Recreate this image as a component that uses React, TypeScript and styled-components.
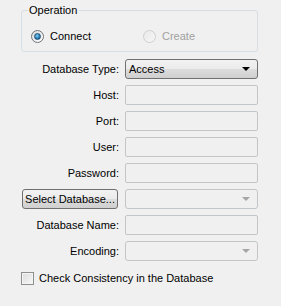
import { Fragment } from "react";
import styled, { createGlobalStyle } from "styled-components";

const GlobalStyle = createGlobalStyle`
  html, body {
    margin: 0;
    padding: 0;
    background: #f0f0f0;
  }
  body {
    font-family: "Liberation Sans", Arial, sans-serif;
    font-size: 11px;
    color: #000;
  }
`;

const Page = styled.div`
  width: 281px;
  height: 306px;
  box-sizing: border-box;
  padding: 4px 0 0 21px;
`;

const Group = styled.fieldset`
  width: 237px;
  box-sizing: border-box;
  margin: 0;
  padding: 13px 0 8px 9px;
  border: 1px solid #d5dfe5;
  border-radius: 3px;
  display: flex;
`;

const Legend = styled.legend`
  padding: 0 2px 0 1px;
  margin-left: -3px;
  line-height: 13px;
`;

const RadioLabel = styled.label<{ $disabled?: boolean }>`
  display: flex;
  align-items: center;
  gap: 6px;
  width: 112px;
  height: 13px;
  line-height: 13px;
  color: ${(p) => (p.$disabled ? "#a0a0a0" : "#000")};
`;

const RadioDot = styled.span<{ $checked?: boolean; $disabled?: boolean }>`
  width: 11px;
  height: 11px;
  border-radius: 50%;
  border: 1px solid ${(p) => (p.$disabled ? "#cfcfcf" : "#6f7479")};
  background: ${(p) =>
    p.$disabled
      ? "linear-gradient(135deg, #eaeaea, #f6f6f6)"
      : "linear-gradient(135deg, #dcdcdc, #ffffff)"};
  display: flex;
  align-items: center;
  justify-content: center;

  &::after {
    content: "";
    display: ${(p) => (p.$checked ? "block" : "none")};
    width: 5px;
    height: 5px;
    border-radius: 50%;
    background: radial-gradient(circle at 40% 35%, #7bd0f5, #1a6fa8 70%, #0d4f85);
    border: 1px solid #1e4d73;
  }
`;

const Form = styled.div`
  display: grid;
  grid-template-columns: 98px 133px;
  column-gap: 6px;
  row-gap: 6px;
  width: 237px;
  margin-top: 7px;
  align-items: center;
`;

const Label = styled.span`
  text-align: right;
  line-height: 20px;
  white-space: nowrap;
`;

const Field = styled.div`
  height: 20px;
  box-sizing: border-box;
  border: 1px solid #c2c6c9;
  border-radius: 2px;
  background: #f0f0f0;
`;

const Combo = styled.div<{ $disabled?: boolean }>`
  height: 20px;
  box-sizing: border-box;
  border: 1px solid ${(p) => (p.$disabled ? "#c2c6c9" : "#707070")};
  border-radius: 3px;
  background: ${(p) =>
    p.$disabled ? "#f0f0f0" : "linear-gradient(#f2f2f2 0%, #ebebeb 50%, #dddddd 51%, #cfcfcf 100%)"};
  display: flex;
  align-items: center;
  justify-content: space-between;
  padding: 0 7px 0 3px;
  line-height: 18px;
`;

const Arrow = styled.span<{ $disabled?: boolean }>`
  width: 0;
  height: 0;
  border-left: 4px solid transparent;
  border-right: 4px solid transparent;
  border-top: 4px solid ${(p) => (p.$disabled ? "#a6a6a6" : "#000")};
  margin-left: auto;
`;

const Button = styled.div`
  height: 20px;
  width: 96px;
  margin-left: 1px;
  box-sizing: border-box;
  border: 1px solid #707070;
  border-radius: 3px;
  background: linear-gradient(#f2f2f2 0%, #ebebeb 50%, #dddddd 51%, #cfcfcf 100%);
  display: flex;
  align-items: center;
  justify-content: center;
  line-height: 18px;
  white-space: nowrap;
`;

const CheckRow = styled.label`
  display: flex;
  align-items: center;
  gap: 5px;
  margin-top: 11px;
  height: 13px;
  line-height: 13px;
`;

const Box = styled.span`
  width: 13px;
  height: 13px;
  box-sizing: border-box;
  border: 1px solid #8e8f8f;
  background: linear-gradient(135deg, #dcdcdc, #f8f8f8);
  box-shadow: inset 0 0 0 1px #f4f4f4;
`;

const rows = ["Host:", "Port:", "User:", "Password:"];

export default function App() {
  return (
    <Page>
      <GlobalStyle />
      <Group>
        <Legend>Operation</Legend>
        <RadioLabel>
          <RadioDot $checked />
          Connect
        </RadioLabel>
        <RadioLabel $disabled>
          <RadioDot $disabled />
          Create
        </RadioLabel>
      </Group>
      <Form>
        <Label>Database Type:</Label>
        <Combo>
          Access
          <Arrow />
        </Combo>
        {rows.map((r) => (
          <Fragment key={r}>
            <Label>{r}</Label>
            <Field />
          </Fragment>
        ))}
        <Button>Select Database...</Button>
        <Combo $disabled>
          <Arrow $disabled />
        </Combo>
        <Label>Database Name:</Label>
        <Field />
        <Label>Encoding:</Label>
        <Combo $disabled>
          <Arrow $disabled />
        </Combo>
      </Form>
      <CheckRow>
        <Box />
        Check Consistency in the Database
      </CheckRow>
    </Page>
  );
}
